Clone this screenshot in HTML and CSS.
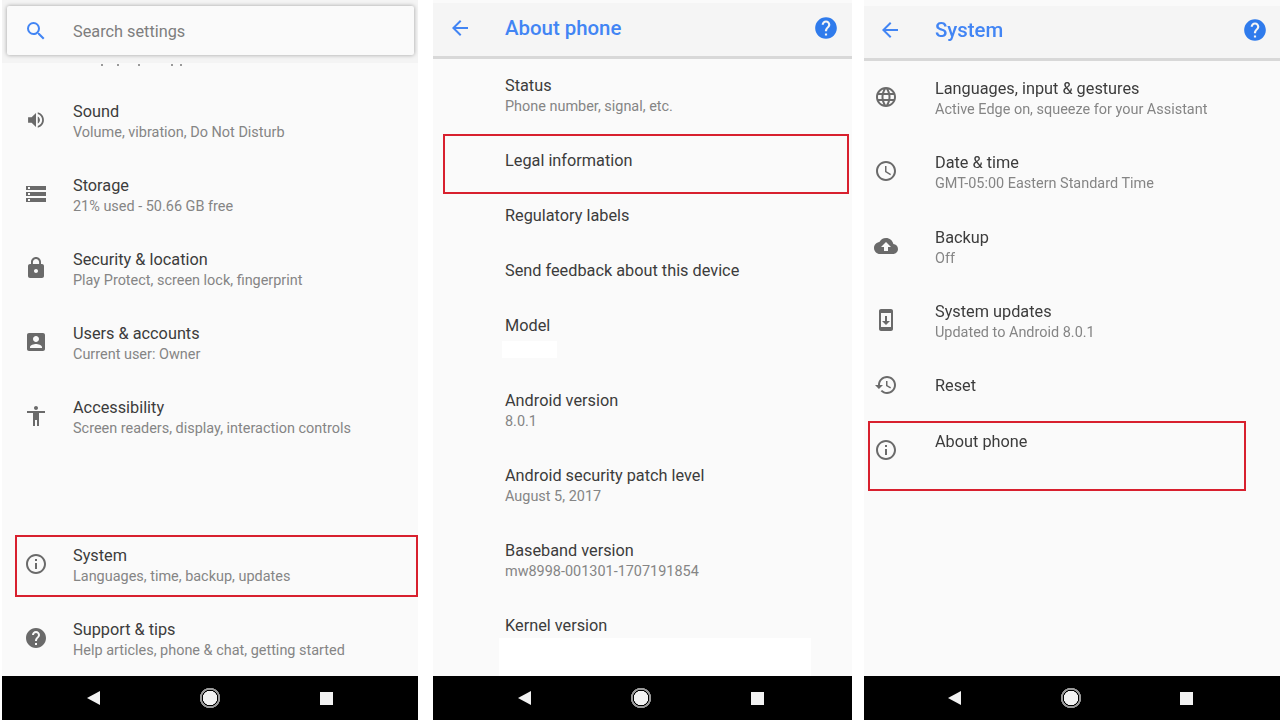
FILE: index.html
```html
<!DOCTYPE html>
<html lang="en">
<head>
    <meta charset="UTF-8">
    <meta name="viewport" content="width=device-width, initial-scale=1.0">
    <title>Android settings</title>
    <link rel="stylesheet" href="styles.css">
</head>
<body>
    <main class="shots">
        <!-- settings home -->
        <section class="phone home">
            <header class="search-bar">
                <div class="search-card">
                    <svg class="search-icon" viewBox="0 0 24 24"><path d="M15.5 14h-.79l-.28-.27A6.471 6.471 0 0 0 16 9.5 6.5 6.5 0 1 0 9.5 16c1.61 0 3.09-.59 4.23-1.57l.27.28v.79l5 4.99L20.49 19l-4.99-5zm-6 0C7.01 14 5 11.99 5 9.5S7.01 5 9.5 5 14 7.01 14 9.5 11.99 14 9.5 14z"/></svg>
                    <span>Search settings</span>
                </div>
            </header>
            <div class="list">
                <!-- descenders of the row scrolled under the search bar -->
                <svg class="scrolled-off" viewBox="0 0 416 22"><path d="M99 1h2v2h-2zM115 1h2v2h-2zM136 1h2v2h-2zM169 1h2v2h-2zM178 1h2v2h-2z"/></svg>
                <div class="row">
                    <svg class="icon sound" viewBox="0 0 24 24"><path d="M3 9v6h4l5 5V4L7 9H3zm13.5 3c0-1.77-1.02-3.29-2.5-4.03v8.05c1.48-.73 2.5-2.25 2.5-4.02zM14 3.23v2.06c2.89.86 5 3.54 5 6.71s-2.11 5.85-5 6.71v2.06c4.01-.91 7-4.49 7-8.77s-2.99-7.86-7-8.77z"/></svg>
                    <div class="text"><h3>Sound</h3><p>Volume, vibration, Do Not Disturb</p></div>
                </div>
                <div class="row">
                    <svg class="icon" viewBox="0 0 24 24"><path d="M2 20h20v-4H2v4zm2-3h2v2H4v-2zM2 4v4h20V4H2zm4 3H4V5h2v2zm-4 7h20v-4H2v4zm2-3h2v2H4v-2z"/></svg>
                    <div class="text"><h3>Storage</h3><p>21% used - 50.66 GB free</p></div>
                </div>
                <div class="row">
                    <svg class="icon" viewBox="0 0 24 24"><path d="M18 8h-1V6c0-2.76-2.24-5-5-5S7 3.24 7 6v2H6c-1.1 0-2 .9-2 2v10c0 1.1.9 2 2 2h12c1.1 0 2-.9 2-2V10c0-1.1-.9-2-2-2zm-6 9c-1.1 0-2-.9-2-2s.9-2 2-2 2 .9 2 2-.9 2-2 2zm3.1-9H8.9V6c0-1.71 1.39-3.1 3.1-3.1 1.71 0 3.1 1.39 3.1 3.1v2z"/></svg>
                    <div class="text"><h3>Security &amp; location</h3><p>Play Protect, screen lock, fingerprint</p></div>
                </div>
                <div class="row">
                    <svg class="icon" viewBox="0 0 24 24"><path d="M3 5v14c0 1.1.89 2 2 2h14c1.1 0 2-.9 2-2V5c0-1.1-.9-2-2-2H5c-1.11 0-2 .9-2 2zm12 4c0 1.66-1.34 3-3 3s-3-1.34-3-3 1.34-3 3-3 3 1.34 3 3zm-9 8c0-2 4-3.1 6-3.1s6 1.1 6 3.1v1H6v-1z"/></svg>
                    <div class="text"><h3>Users &amp; accounts</h3><p>Current user: Owner</p></div>
                </div>
                <div class="row">
                    <svg class="icon" viewBox="0 0 24 24"><path d="M12 2c1.1 0 2 .9 2 2s-.9 2-2 2-2-.9-2-2 .9-2 2-2zm9 7h-6v13h-2v-6h-2v6H9V9H3V7h18v2z"/></svg>
                    <div class="text"><h3>Accessibility</h3><p>Screen readers, display, interaction controls</p></div>
                </div>
                <div class="row"></div>
                <div class="row">
                    <svg class="icon" viewBox="0 0 24 24"><path d="M11 7h2v2h-2zm0 4h2v6h-2zm1-9C6.48 2 2 6.48 2 12s4.48 10 10 10 10-4.48 10-10S17.52 2 12 2zm0 18c-4.41 0-8-3.59-8-8s3.59-8 8-8 8 3.59 8 8-3.59 8-8 8z"/></svg>
                    <div class="text"><h3>System</h3><p>Languages, time, backup, updates</p></div>
                </div>
                <div class="row">
                    <svg class="icon" viewBox="0 0 24 24"><path d="M12 2C6.48 2 2 6.48 2 12s4.48 10 10 10 10-4.48 10-10S17.52 2 12 2zm1 17h-2v-2h2v2zm2.07-7.75l-.9.92C13.45 12.9 13 13.5 13 15h-2v-.5c0-1.1.45-2.1 1.17-2.83l1.24-1.26c.37-.36.59-.86.59-1.41 0-1.1-.9-2-2-2s-2 .9-2 2H8c0-2.21 1.79-4 4-4s4 1.79 4 4c0 .88-.36 1.68-.93 2.25z"/></svg>
                    <div class="text"><h3>Support &amp; tips</h3><p>Help articles, phone &amp; chat, getting started</p></div>
                </div>
            </div>
            <nav class="navbar">
                <span class="nav-back"></span>
                <span class="nav-home"></span>
                <span class="nav-recent"></span>
            </nav>
            <div class="mark mark-system"></div>
        </section>

        <!-- about phone -->
        <section class="phone about">
            <header class="appbar">
                <svg class="back" viewBox="0 0 24 24"><path d="M20 11H7.83l5.59-5.59L12 4l-8 8 8 8 1.41-1.41L7.83 13H20v-2z"/></svg>
                <h2>About phone</h2>
                <svg class="help" viewBox="0 0 24 24"><path d="M12 2C6.48 2 2 6.48 2 12s4.48 10 10 10 10-4.48 10-10S17.52 2 12 2zm1 17h-2v-2h2v2zm2.07-7.75l-.9.92C13.45 12.9 13 13.5 13 15h-2v-.5c0-1.1.45-2.1 1.17-2.83l1.24-1.26c.37-.36.59-.86.59-1.41 0-1.1-.9-2-2-2s-2 .9-2 2H8c0-2.21 1.79-4 4-4s4 1.79 4 4c0 .88-.36 1.68-.93 2.25z"/></svg>
            </header>
            <div class="list">
                <div class="row status">
                    <div class="text"><h3>Status</h3><p>Phone number, signal, etc.</p></div>
                </div>
                <div class="row short"><div class="text"><h3>Legal information</h3></div></div>
                <div class="row short"><div class="text"><h3>Regulatory labels</h3></div></div>
                <div class="row short"><div class="text"><h3>Send feedback about this device</h3></div></div>
                <div class="row">
                    <div class="text"><h3>Model</h3><div class="blank-model"></div></div>
                </div>
                <div class="row">
                    <div class="text"><h3>Android version</h3><p>8.0.1</p></div>
                </div>
                <div class="row">
                    <div class="text"><h3>Android security patch level</h3><p>August 5, 2017</p></div>
                </div>
                <div class="row">
                    <div class="text"><h3>Baseband version</h3><p>mw8998-001301-1707191854</p></div>
                </div>
                <div class="row">
                    <div class="text"><h3>Kernel version</h3><div class="blank-kernel"></div></div>
                </div>
            </div>
            <nav class="navbar">
                <span class="nav-back"></span>
                <span class="nav-home"></span>
                <span class="nav-recent"></span>
            </nav>
            <div class="mark mark-legal"></div>
        </section>

        <!-- system -->
        <section class="phone system">
            <header class="appbar">
                <svg class="back" viewBox="0 0 24 24"><path d="M20 11H7.83l5.59-5.59L12 4l-8 8 8 8 1.41-1.41L7.83 13H20v-2z"/></svg>
                <h2>System</h2>
                <svg class="help" viewBox="0 0 24 24"><path d="M12 2C6.48 2 2 6.48 2 12s4.48 10 10 10 10-4.48 10-10S17.52 2 12 2zm1 17h-2v-2h2v2zm2.07-7.75l-.9.92C13.45 12.9 13 13.5 13 15h-2v-.5c0-1.1.45-2.1 1.17-2.83l1.24-1.26c.37-.36.59-.86.59-1.41 0-1.1-.9-2-2-2s-2 .9-2 2H8c0-2.21 1.79-4 4-4s4 1.79 4 4c0 .88-.36 1.68-.93 2.25z"/></svg>
            </header>
            <div class="list">
                <div class="row">
                    <svg class="icon" viewBox="0 0 24 24"><path d="M11.99 2C6.47 2 2 6.48 2 12s4.47 10 9.99 10C17.52 22 22 17.52 22 12S17.52 2 11.99 2zm6.93 6h-2.95c-.32-1.25-.78-2.45-1.38-3.56 1.84.63 3.37 1.91 4.33 3.56zM12 4.04c.83 1.2 1.48 2.53 1.91 3.96h-3.82c.43-1.43 1.08-2.76 1.91-3.96zM4.26 14C4.1 13.36 4 12.69 4 12s.1-1.36.26-2h3.38c-.08.66-.14 1.32-.14 2 0 .68.06 1.34.14 2H4.26zm.82 2h2.95c.32 1.25.78 2.45 1.38 3.56-1.84-.63-3.37-1.9-4.33-3.56zm2.95-8H5.08c.96-1.66 2.49-2.93 4.33-3.56C8.81 5.55 8.35 6.75 8.03 8zM12 19.96c-.83-1.2-1.48-2.53-1.91-3.96h3.82c-.43 1.43-1.08 2.76-1.91 3.96zM14.34 14H9.66c-.09-.66-.16-1.32-.16-2 0-.68.07-1.35.16-2h4.68c.09.65.16 1.32.16 2 0 .68-.07 1.34-.16 2zm.25 5.56c.6-1.11 1.06-2.31 1.38-3.56h2.95c-.96 1.65-2.49 2.93-4.33 3.56zM16.36 14c.08-.66.14-1.32.14-2 0-.68-.06-1.34-.14-2h3.38c.16.64.26 1.31.26 2s-.1 1.36-.26 2h-3.38z"/></svg>
                    <div class="text"><h3>Languages, input &amp; gestures</h3><p>Active Edge on, squeeze for your Assistant</p></div>
                </div>
                <div class="row">
                    <svg class="icon" viewBox="0 0 24 24"><path d="M11.99 2C6.47 2 2 6.48 2 12s4.47 10 9.99 10C17.52 22 22 17.52 22 12S17.52 2 11.99 2zM12 20c-4.42 0-8-3.58-8-8s3.58-8 8-8 8 3.58 8 8-3.58 8-8 8zm.5-13H11v6l5.25 3.15.75-1.23-4.5-2.67z"/></svg>
                    <div class="text"><h3>Date &amp; time</h3><p>GMT-05:00 Eastern Standard Time</p></div>
                </div>
                <div class="row">
                    <svg class="icon" viewBox="0 0 24 24"><path d="M19.35 10.04C18.67 6.59 15.64 4 12 4 9.11 4 6.6 5.64 5.35 8.04 2.34 8.36 0 10.91 0 14c0 3.31 2.69 6 6 6h13c2.76 0 5-2.24 5-5 0-2.64-2.05-4.78-4.65-4.96zM14 13v4h-4v-4H7l5-5 5 5h-3z"/></svg>
                    <div class="text"><h3>Backup</h3><p>Off</p></div>
                </div>
                <div class="row">
                    <svg class="icon" viewBox="0 0 24 24"><path d="M17 1.01L7 1c-1.1 0-2 .9-2 2v18c0 1.1.9 2 2 2h10c1.1 0 2-.9 2-2V3c0-1.1-.9-1.99-2-1.99zM17 19H7V5h10v14zm-1-6h-3V8h-2v5H8l4 4 4-4z"/></svg>
                    <div class="text"><h3>System updates</h3><p>Updated to Android 8.0.1</p></div>
                </div>
                <div class="row short">
                    <svg class="icon" viewBox="0 0 24 24"><path d="M13 3c-4.97 0-9 4.03-9 9H1l3.89 3.89.07.14L9 12H6c0-3.87 3.13-7 7-7s7 3.13 7 7-3.13 7-7 7c-1.93 0-3.68-.79-4.94-2.06l-1.42 1.42C8.27 19.99 10.51 21 13 21c4.97 0 9-4.03 9-9s-4.03-9-9-9zm-1 5v5l4.28 2.54.72-1.21-3.5-2.08V8H12z"/></svg>
                    <div class="text"><h3>Reset</h3></div>
                </div>
                <div class="row">
                    <svg class="icon" viewBox="0 0 24 24"><path d="M11 7h2v2h-2zm0 4h2v6h-2zm1-9C6.48 2 2 6.48 2 12s4.48 10 10 10 10-4.48 10-10S17.52 2 12 2zm0 18c-4.41 0-8-3.59-8-8s3.59-8 8-8 8 3.59 8 8-3.59 8-8 8z"/></svg>
                    <div class="text"><h3>About phone</h3></div>
                </div>
            </div>
            <nav class="navbar">
                <span class="nav-back"></span>
                <span class="nav-home"></span>
                <span class="nav-recent"></span>
            </nav>
            <div class="mark mark-about"></div>
        </section>
    </main>
</body>
</html>
```

FILE: styles.css
```css
*{
    box-sizing: border-box;
}

body{
    margin: 0;
    background-color: #fff;
    font-family: Roboto, "Liberation Sans", sans-serif;
}

.shots{
    display: flex;
    width: 1280px;
    height: 720px;
    padding-left: 2px;
    overflow: hidden;
    filter: blur(0.6px);
}

.phone{
    position: relative;
    display: flex;
    flex-direction: column;
    background-color: #fafafa;
}

.home{
    width: 416px;
}

.about{
    width: 419px;
    margin-left: 15px;
    padding-top: 3px;
}

.system{
    width: 416px;
    margin-left: 12px;
    padding-top: 6px;
}

/* top bars */
.search-bar{
    flex: none;
    height: 63px;
    padding: 6px 4px 0 5px;
    background-color: #f4f4f4;
}

.search-card{
    display: flex;
    align-items: center;
    height: 49px;
    padding: 1px 0 0 17px;
    background-color: #fafafa;
    box-shadow: 0 0 4px rgba(0, 0, 0, 0.35);
    border-radius: 2px;
    color: #7e7e7e;
    font-size: 16.3px;
}

.search-icon{
    width: 24px;
    height: 24px;
    margin-right: 25px;
    fill: #4285f4;
}

.appbar{
    flex: none;
    display: flex;
    align-items: center;
    height: 56px;
    padding: 0 13px 4px 15px;
    background-color: #f5f5f5;
    border-bottom: 3px solid #d8d8d8;
}

.system .appbar{
    height: 55px;
    padding: 0 12px 4px 14px;
}

.appbar h2{
    flex: 1;
    margin: 0 0 0 33px;
    color: #4285f4;
    font-size: 20.4px;
    font-weight: 500;
}

.back{
    width: 24px;
    height: 24px;
    fill: #4285f4;
}

.help{
    width: 26px;
    height: 26px;
    fill: #2f7bec;
}

/* rows */
.list{
    flex: 1;
    min-height: 0;
    overflow: hidden;
}

.scrolled-off{
    display: block;
    width: 416px;
    height: 22px;
    fill: #9a9a9a;
}

.row{
    display: flex;
    align-items: flex-start;
    height: 74px;
    padding-top: 16px;
}

.row.short{
    height: 55px;
    padding-top: 17px;
}

.home .row{
    padding-left: 22px;
}

.about .row{
    height: 75px;
    padding-top: 17px;
    padding-left: 72px;
}

.about .row.status{
    height: 74px;
    padding-top: 16px;
}

.about .row.short{
    height: 55px;
}

.system .row{
    padding-left: 10px;
}

.system .row:first-child{
    margin-top: 1px;
}

.system .row:nth-child(2){
    height: 75px;
}

.system .row.short{
    height: 56px;
    padding-top: 16px;
}

.icon{
    flex: none;
    width: 24px;
    height: 24px;
    margin-top: 7px;
    margin-right: 25px;
    fill: #6a6a6a;
}

.icon.sound{
    transform: scale(0.88);
}

.system .icon{
    margin-right: 37px;
}

.row.short .icon{
    margin-top: -2px;
}

.text h3{
    margin: 0;
    color: #3c3c3c;
    font-size: 16.3px;
    font-weight: 400;
    line-height: 21px;
    white-space: nowrap;
}

.text p{
    margin: 0;
    color: #858585;
    font-size: 14.45px;
    line-height: 21px;
    white-space: nowrap;
}

.blank-model{
    width: 55px;
    height: 17px;
    margin: 5px 0 0 -3px;
    background-color: #fff;
}

.blank-kernel{
    width: 312px;
    height: 50px;
    margin: 2px 0 0 -6px;
    background-color: #fff;
}

/* android nav buttons */
.navbar{
    flex: none;
    display: flex;
    align-items: center;
    justify-content: center;
    gap: 92px;
    height: 44px;
    background-color: #000;
}

.about .navbar,
.system .navbar{
    padding-right: 3px;
}

.navbar span{
    display: block;
    width: 24px;
    height: 24px;
}

.nav-back{
    position: relative;
}

.nav-back::before{
    content: "";
    position: absolute;
    left: 5px;
    top: 5px;
    border-style: solid;
    border-width: 7px 13px 7px 0;
    border-color: transparent #f2f2f2 transparent transparent;
}

.nav-home{
    border-radius: 50%;
    background: radial-gradient(circle, #f2f2f2 0 7px, #000 7.5px 8px, #9a9a9a 8.5px 10px, #000 10.5px);
}

.nav-recent{
    background: linear-gradient(#f2f2f2, #f2f2f2) center / 13px 13px no-repeat;
}

/* red tutorial boxes drawn over the screenshot */
.mark{
    position: absolute;
    border: 2px solid #d8202e;
}

.mark-system{
    left: 13px;
    top: 535px;
    width: 403px;
    height: 62px;
}

.mark-legal{
    left: 10px;
    top: 134px;
    width: 406px;
    height: 60px;
}

.mark-about{
    left: 4px;
    top: 421px;
    width: 378px;
    height: 70px;
}
```
